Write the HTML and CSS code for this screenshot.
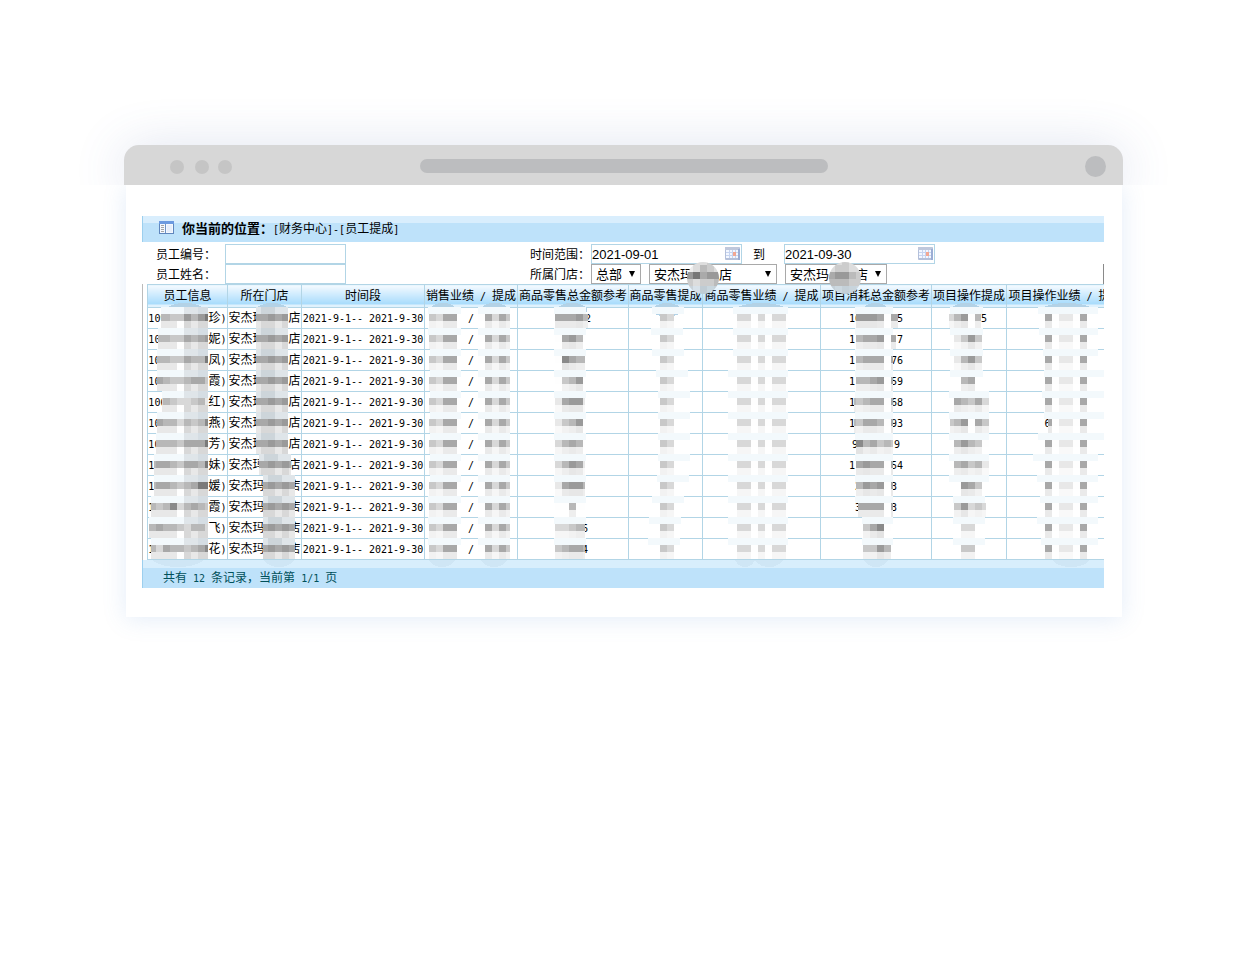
FILE: index.html
```html
<!DOCTYPE html>
<html lang="zh-CN">
<head>
<meta charset="utf-8">
<title>员工提成</title>
<link rel="stylesheet" href="styles.css">
</head>
<body>
<main class="window">
  <header class="titlebar">
    <span class="dot"></span><span class="dot dot-mid"></span><span class="dot"></span>
    <span class="address"></span>
    <span class="avatar"></span>
  </header>
  <div class="page">
    <section class="panel">
      <div class="crumb">
        <svg class="crumb-icon" width="15" height="13" viewBox="0 0 15 13">
          <rect x=".5" y=".5" width="14" height="12" fill="#f4f8fe" stroke="#5f86bd"/>
          <rect x="0" y="0" width="15" height="3" fill="#6c9ae0"/>
          <path d="M6.500 3v9" stroke="#6f93c4"/>
          <path d="M2 4.500h3M2 6.500h3M2 8.500h3M2 10.500h3" stroke="#a5a5a5"/>
          <rect x="8" y="4" width="5" height="7" fill="#e6eefb"/>
        </svg>
        <b class="crumb-title">你当前的位置：</b><span><i class="m">[</i>财务中心<i class="m">]-[</i>员工提成<i class="m">]</i></span>
      </div>
      <form class="filters">
        <label class="label" for="no">员工编号：</label>
        <input class="box" id="no" type="text">
        <label class="label label-right" for="from">时间范围：</label>
        <div class="fields">
          <span class="date"><input class="box" id="from" type="text" value="2021-09-01"><svg class="cal" width="15" height="13" viewBox="0 0 15 13"><use href="#cal"/></svg></span>
          <label class="to" for="until">到</label>
          <span class="date"><input class="box" id="until" type="text" value="2021-09-30"><svg class="cal" width="15" height="13" viewBox="0 0 15 13"><g id="cal"><rect width="15" height="13" rx="1" fill="#b4c0da"/><rect width="14" height="3" fill="#bfc8dc"/><path d="M1 3h12v8H1z" fill="#f3f7ff"/><path d="M1 5.500h12M1 8.500h12M4.500 3v8M7.500 3v8M10.500 3v8" stroke="#c6d4f0"/><rect x="8" y="5" width="3" height="4" fill="#f2a793"/><path d="M14 2v11" stroke="#9badd4" stroke-width="2"/></g></svg></span>
        </div>
        <label class="label" for="name">员工姓名：</label>
        <input class="box" id="name" type="text">
        <label class="label label-right" for="group">所属门店：</label>
        <div class="fields fields-shop">
          <span class="pick pick-s"><select id="group"><option>总部</option></select><svg class="arrow" width="8" height="7"><path d="M1 0h6L4 6z"/></svg></span>
          <span class="pick pick-l"><select aria-label="门店一"><option>安杰玛　　店</option></select><svg class="arrow" width="8" height="7"><path d="M1 0h6L4 6z"/></svg></span>
          <span class="pick pick-m"><select aria-label="门店二"><option>安杰玛　　店</option></select><svg class="arrow" width="8" height="7"><path d="M1 0h6L4 6z"/></svg></span>
          <button class="search" type="button" aria-label="查询"></button>
        </div>
      </form>
      <div class="grid">
        <table>
          <colgroup><col class="c80"><col class="c74"><col class="c123"><col class="c93"><col class="c111"><col class="c74"><col class="c118"><col class="c111"><col class="c75"><col class="c118"></colgroup>
          <thead><tr><th>员工信息</th><th>所在门店</th><th>时间段</th><th>销售业绩<i class="m"> / </i>提成</th><th>商品零售总金额参考</th><th>商品零售提成</th><th>商品零售业绩<i class="m"> / </i>提成</th><th>项目消耗总金额参考</th><th>项目操作提成</th><th>项目操作业绩<i class="m"> / </i>提成</th></tr></thead>
          <tbody>
            <tr><td><i class="m">109       </i>珍<i class="m">)</i></td><td>安杰玛　　店</td><td><i class="m">2021-9-1-- 2021-9-30</i></td><td><i class="m">/</i></td><td><i class="m">     2</i></td><td></td><td></td><td><i class="m">16      5</i></td><td><i class="m">     5</i></td><td></td></tr>
            <tr><td><i class="m">10        </i>妮<i class="m">)</i></td><td>安杰玛　　店</td><td><i class="m">2021-9-1-- 2021-9-30</i></td><td><i class="m">/</i></td><td></td><td></td><td></td><td><i class="m">1       7</i></td><td></td><td></td></tr>
            <tr><td><i class="m">10        </i>凤<i class="m">)</i></td><td>安杰玛　　店</td><td><i class="m">2021-9-1-- 2021-9-30</i></td><td><i class="m">/</i></td><td></td><td></td><td></td><td><i class="m">1      76</i></td><td></td><td></td></tr>
            <tr><td><i class="m">10        </i>霞<i class="m">)</i></td><td>安杰玛　　店</td><td><i class="m">2021-9-1-- 2021-9-30</i></td><td><i class="m">/</i></td><td></td><td></td><td></td><td><i class="m">1      59</i></td><td></td><td></td></tr>
            <tr><td><i class="m">106       </i>红<i class="m">)</i></td><td>安杰玛　　店</td><td><i class="m">2021-9-1-- 2021-9-30</i></td><td><i class="m">/</i></td><td></td><td></td><td></td><td><i class="m">1      68</i></td><td></td><td></td></tr>
            <tr><td><i class="m">10        </i>燕<i class="m">)</i></td><td>安杰玛　　店</td><td><i class="m">2021-9-1-- 2021-9-30</i></td><td><i class="m">/</i></td><td></td><td></td><td></td><td><i class="m">1      93</i></td><td></td><td><i class="m">6      </i></td></tr>
            <tr><td><i class="m">10        </i>芳<i class="m">)</i></td><td>安杰玛　　店</td><td><i class="m">2021-9-1-- 2021-9-30</i></td><td><i class="m">/</i></td><td></td><td></td><td></td><td><i class="m">9      9</i></td><td></td><td></td></tr>
            <tr><td><i class="m">1         </i>妹<i class="m">)</i></td><td>安杰玛　　店</td><td><i class="m">2021-9-1-- 2021-9-30</i></td><td><i class="m">/</i></td><td></td><td></td><td></td><td><i class="m">1      54</i></td><td></td><td></td></tr>
            <tr><td><i class="m">1         </i>媛<i class="m">)</i></td><td>安杰玛　　店</td><td><i class="m">2021-9-1-- 2021-9-30</i></td><td><i class="m">/</i></td><td></td><td></td><td></td><td><i class="m">2     3</i></td><td></td><td></td></tr>
            <tr><td><i class="m">1         </i>霞<i class="m">)</i></td><td>安杰玛　　店</td><td><i class="m">2021-9-1-- 2021-9-30</i></td><td><i class="m">/</i></td><td></td><td></td><td></td><td><i class="m">3     3</i></td><td></td><td></td></tr>
            <tr><td><i class="m">          </i>飞<i class="m">)</i></td><td>安杰玛　　店</td><td><i class="m">2021-9-1-- 2021-9-30</i></td><td><i class="m">/</i></td><td><i class="m">    6</i></td><td></td><td></td><td></td><td></td><td></td></tr>
            <tr><td><i class="m">1         </i>花<i class="m">)</i></td><td>安杰玛　　店</td><td><i class="m">2021-9-1-- 2021-9-30</i></td><td><i class="m">/</i></td><td><i class="m">    4</i></td><td></td><td></td><td></td><td></td><td></td></tr>
          </tbody>
        </table>
      </div>
      <footer class="summary">共有<i class="m"> 12 </i>条记录，当前第<i class="m"> 1/1 </i>页</footer>
      <svg class="mask" id="mask" width="962" height="372" viewBox="142 216 962 372" shape-rendering="crispEdges" aria-hidden="true"></svg>
    </section>
  </div>
</main>
<script src="mask.js"></script>
</body>
</html>
```
FILE: styles.css
```css
* { box-sizing: border-box; }
body {
  margin: 0;
  padding: 145px 133px 40px 124px;
  background: #fff;
  color: #000;
  font: 12px/20px "Liberation Sans", "Noto Sans CJK SC", sans-serif;
}
.m {
  font: 10px/12px "DejaVu Sans Mono", monospace;
  white-space: pre;
}
.titlebar {
  display: flex;
  align-items: center;
  height: 40px;
  padding: 3px 17px 0 46px;
  border-radius: 15px 15px 0 0;
  background: #d7d7d7;
  box-shadow: 0 4px 52px rgba(70, 95, 165, .2);
  clip-path: inset(-90px -90px 0 -90px);
}
.dot {
  width: 14px;
  height: 14px;
  border-radius: 50%;
  background: #c5c5c5;
}
.dot-mid { margin: 0 9px 0 11px; }
.address {
  width: 408px;
  height: 14px;
  margin: 0 auto 2px 188px;
  border-radius: 7px;
  background: #bcbdbf;
}
.avatar {
  width: 21px;
  height: 21px;
  border-radius: 50%;
  background: #bcbdbf;
}
.page {
  margin: 0 1px 0 2px;
  padding: 31px 18px 29px 16px;
  background: #fff;
  box-shadow: 0 2px 22px rgba(90, 145, 215, .17);
  clip-path: inset(0 -50px -50px -50px);
}
.panel {
  position: relative;
  overflow: hidden;
}
.crumb {
  display: flex;
  align-items: center;
  height: 26px;
  padding-left: 16px;
  border-left: 1px solid #9ccfee;
  background: linear-gradient(#d9eefd 7px, #bee2fa 7px);
}
.crumb-icon { margin: 0 8px 3px 0; }
.crumb-title {
  font-size: 13px;
}
.filters {
  display: grid;
  grid-template-columns: 83px 121px 245px 1fr;
  grid-template-rows: 20px 20px;
  padding-top: 2px;
}
.label { padding: 1px 0 0 14px; }
.label-right {
  padding: 1px 1px 0 0;
  text-align: right;
}
.box {
  width: 100%;
  height: 20px;
  padding: 0;
  border: 1px solid #b2d5e6;
  background: #fff;
  color: #000;
  font: 13px/18px "Liberation Sans", sans-serif;
}
.fields { display: flex; }
.fields-shop { gap: 8px; }
.date {
  position: relative;
  width: 151px;
}
.cal {
  position: absolute;
  top: 3px;
  right: 2px;
}
.to { padding: 1px 19px 0 11px; }
.pick {
  position: relative;
  height: 20px;
}
.pick-s { width: 50px; }
.pick-l { width: 128px; }
.pick-m { width: 102px; }
.pick select {
  width: 100%;
  height: 20px;
  padding: 0 0 0 4px;
  border: 1px solid #a9a9a9;
  border-radius: 0;
  appearance: none;
  background: #fff;
  color: #000;
  font: 13px/18px "Noto Sans CJK SC", sans-serif;
}
.arrow {
  position: absolute;
  top: 7px;
  right: 5px;
}
.search {
  flex: none;
  width: 60px;
  height: 20px;
  margin: 0 -59px 0 auto;
  border: 1px solid #8a8a8a;
  background: #eee;
}
.grid {
  overflow: hidden;
  padding-left: 4px;
  border-left: 1px solid #bbb;
}
table {
  width: 977px;
  table-layout: fixed;
  border-collapse: collapse;
}
.c74 { width: 74px; }
.c75 { width: 75px; }
.c80 { width: 80px; }
.c93 { width: 93px; }
.c111 { width: 111px; }
.c118 { width: 118px; }
.c123 { width: 123px; }
th, td {
  height: 21px;
  padding: 0;
  border: 1px solid #b2d5e6;
  font-weight: normal;
  line-height: 20px;
  text-align: center;
  white-space: nowrap;
}
th {
  height: 23px;
  background: linear-gradient(#f4faff, #a6dbfc 19px, #e0f2fd 19px);
}
.summary {
  height: 28px;
  padding: 8px 0 0 20px;
  border-left: 1px solid #9ccfee;
  background: linear-gradient(#d8eefc 8px, #bee2fa 8px);
  color: #00505a;
}
.mask {
  position: absolute;
  top: 0;
  left: 0;
  pointer-events: none;
}
```
FILE: mask.js
```js
// Draws the privacy mosaic over table columns. Each hex digit is the grey of one 7px tile.
const NS = 'http://www.w3.org/2000/svg';
const svg = document.getElementById('mask');
const T = 7, TOP = 314, STEP = 21;

function add(name, attrs, parent = svg) {
  const el = document.createElementNS(NS, name);
  for (const k in attrs) el.setAttribute(k, attrs[k]);
  parent.appendChild(el);
  return el;
}
const rect = (x, y, width, height, fill, parent) => add('rect', { x, y, width, height, fill }, parent);
const grey = v => `rgb(${v},${v},${v})`;
const value = d => d === 'f' ? 254 : parseInt(d, 16) * 16 + 10 - (d > '9' ? 2 : 0);

function tiles(x, y, h, digits, from, to, fade) {
  [...digits].forEach((d, i) => {
    if (d === '.') return;
    const a = Math.max(x + i * T, from), b = Math.min(x + (i + 1) * T, to);
    if (b <= a) return;
    const v = value(d);
    rect(a, y, b - a, h, grey(Math.round(255 - (255 - v) * fade)));
  });
}

// rows: [start x, dark tiles, left edge, right edge, light tiles]; band: pale strip between rows
function column(rows, band, cap) {
  add('ellipse', { cx: (cap[0] + cap[1]) / 2, cy: 310, rx: (cap[1] - cap[0]) / 2, ry: 7, fill: '#b3d2e6' });
  rows.forEach((r, i) => {
    const y = TOP + i * STEP;
    const [x0, x1] = band(i);
    rect(x0, y - T, x1 - x0, T, '#f3f9fc');
    tiles(r[0], y, T, r[1], r[2], r[3], 1);
    tiles(r[0], y + T, T, r[4] || r[1], r[2], r[3], r[4] ? 1 : .24);
  });
}
const same = r => Array.from({ length: 12 }, () => r);

const people = ['bbcc9b97', 'bbccaba9', 'bbccabb7', 'abccbaac', 'dbcddcbe', 'abbdbcb8', 'bbbcaaa7', 'aabcaab7', 'aabcba77', 'cb8dbabc', 'abbcdbbd', 'dabbcba8'];
const peopleLeft = [161, 158, 157, 157, 162, 157, 156, 154, 154, 151, 149, 151];
column(people.map((p, i) => [149, 'b' + p, peopleLeft[i], 208, 'eeeefdedd']), i => [peopleLeft[i], 208], [166, 204]);
for (let i = 0; i < 12; i++) {
  const y = TOP + i * STEP - T;
  rect(184, y, 14, T, '#dfe5e9');
  rect(198, y, 10, T, '#d5dde3');
}

const shopX = i => i < 7 ? 256 : i === 7 ? 259 : 263;
column(same(0).map((_, i) => [254, 'aa9a9aaa', shopX(i), shopX(i) + 32, 'eddedede']), i => [shopX(i), shopX(i) + 32], [256, 288]);
for (let i = 0; i < 12; i++) {
  const y = TOP + i * STEP - T, x = shopX(i);
  rect(x, y, 32, T, '#dfe5e9');
  rect(x + 5, y, 14, T, '#cdd5da');
}

column(same([429, 'cdaa', 429, 457]), i => [i < 2 || i > 8 ? 428 : 430, 461], [430, 456]);
column(same([478, 'fadac', 478, 510]), () => [478, 510], [481, 508]);
column(['aaa9b', 'fa9bf', 'f8abb', 'fcb9f', 'ea99e', 'ecb9f', 'dbabf', 'db9ae', 'ea99b', 'ffbff', 'ddcbb', 'cbaab']
  .map((d, i) => [555, d, 555, i === 0 ? 588 : 585]), () => [554, 586], [557, 587]);
const retailX = [652, 651, 652, 656, 658, 658, 658, 658, 657, 652, 649, 648];
column(same([660, 'cd', 660, 674]), i => [retailX[i], retailX[i] + 32], [653, 681]);
column(same([737, 'ddfdfdd', 737, 786]), i => [i < 3 ? 733 : 728, 788], [736, 786]);
column([
  [849, '.999afa', 855, 900], [849, '.baa9fa', 854, 896], [849, '.baaafa', 854, 893], [849, '.bba9fa', 854, 893],
  [849, 'bcbaafa', 854, 893], [849, 'bcaabfa', 854, 893], [849, '.8bacbc', 855, 893], [849, '.a9aafa', 856, 893],
  [849, '.b9a9fa', 856, 893], [849, '.aaaafa', 858, 893], [849, '..ca8f', 863, 892], [849, '..cc9b', 863, 891]
], i => [i < 10 ? 855 : 862, 893], [863, 888]);
column([
  [947, 'db9fb', 949, 981], [954, 'ec9ce', 954, 982], [954, 'eb9ce', 954, 982], [961, 'ba', 961, 975],
  [954, 'abcad', 954, 989], [947, 'cb9fac', 950, 989], [954, 'b9bcf', 954, 989], [954, 'bacbe', 954, 989],
  [961, '9ac', 961, 982], [954, 'c9dcd', 954, 986], [961, 'dd', 961, 975], [961, 'cc', 961, 975]
], i => i < 4 ? [950, 983] : i < 9 ? [949, 989] : [953, 985], [951, 981]);
const lastX = [1038, 1039, 1043, 1044, 1042, 1044, 1038, 1033, 1037, 1040, 1037, 1041];
column(same(0).map((_, i) => [1045, 'afeefaf', i === 5 ? 1048 : 1045, 1087]),
  i => [lastX[i], [3, 4, 5, 6].includes(i) ? 1104 : 1098], [1042, 1092]);

// Rounded ends of the strokes on the summary bar
[[178, 26], [279, 15], [442, 13], [494, 13], [745, 10], [769, 14], [876, 12], [1071, 19]].forEach(([cx, rx]) => {
  add('path', { d: `M${cx - rx} 560h${rx * 2}q${-rx / 3} 7 ${-rx} 7t${-rx}-7z`, fill: '#cfe6f5' });
});

// Round dabs over the shop drop-downs
function dab(id, cx, colours) {
  const clip = add('clipPath', { id });
  add('circle', { cx, cy: 278, r: 16 }, clip);
  const g = add('g', { 'clip-path': `url(#${id})` });
  colours.forEach((row, j) => row.forEach((c, i) => rect(cx - 17 + i * T, 258 + j * T, T, T, c, g)));
}
dab('dab1', 703, [
  ['#ddd', '#ddd', '#ddd', '#ccc', '#ddd'], ['#eee', '#ddd', '#bbb', '#ccc', '#ddd'], ['#999', '#777', '#aaa', '#999', '#999'],
  ['#ccc', '#ddd', '#ccc', '#ccc', '#bbb'], ['#c9d3da', '#d8e2ea', '#c0ccd4', '#c8d6de', '#c4d0d8'], ['#ccd8e0', '#b8ccd8', '#b8ccd8', '#ccd8e0', '#ccd8e0']]);
dab('dab2', 845, [
  ['#ddd', '#ddd', '#ccc', '#ddd', '#ddd'], ['#ddd', '#ccc', '#ccc', '#ddd', '#ddd'], ['#aaa', '#999', '#999', '#bbb', '#ccc'],
  ['#bbb', '#bbb', '#bbb', '#ccc', '#ccc'], ['#c4d0d8', '#ccd8e0', '#c4d0d8', '#c8d4dc', '#ccd8e0'], ['#c4d4e0', '#b8ccd8', '#bccfdb', '#ccd8e0', '#ccd8e0']]);
```
